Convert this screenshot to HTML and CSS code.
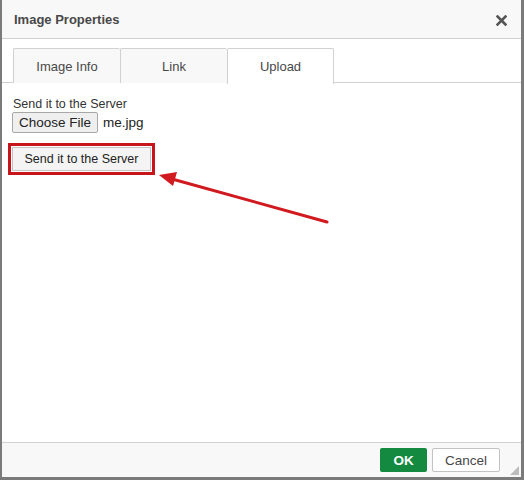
FILE: index.html
```html
<!DOCTYPE html>
<html lang="en">
<head>
  <meta charset="UTF-8">
  <title>Image Properties</title>
  <link rel="stylesheet" href="styles.css">
</head>
<body>
  <div class="dialog">
    <div class="dialog-title">
      <span>Image Properties</span>
      <svg class="close" width="11" height="11" viewBox="0 0 11 11" aria-label="Close">
        <path d="M1.5 1.5 L9.5 9.5 M9.5 1.5 L1.5 9.5" stroke="#555" stroke-width="2.6" stroke-linecap="square"/>
      </svg>
    </div>

    <div class="dialog-body">
      <div class="tabs">
        <div class="tab">Image Info</div>
        <div class="tab">Link</div>
        <div class="tab active">Upload</div>
      </div>

      <div class="tab-panel">
        <div class="field-label">Send it to the Server</div>
        <div class="file-row">
          <button class="file-btn">Choose File</button>
          <span class="file-name">me.jpg</span>
        </div>
        <div class="highlight">
          <button class="send-btn">Send it to the Server</button>
        </div>
      </div>

      <!-- annotation arrow pointing at the upload button -->
      <svg class="arrow" width="524" height="300" viewBox="0 0 524 300" aria-hidden="true">
        <line x1="327" y1="222" x2="172" y2="179" stroke="#d11a1f" stroke-width="3" stroke-linecap="round"/>
        <polygon points="159,175 177,172 173,186" fill="#d11a1f"/>
      </svg>
    </div>

    <div class="dialog-footer">
      <button class="btn-ok">OK</button>
      <button class="btn-cancel">Cancel</button>
      <span class="grip"></span>
    </div>
  </div>
</body>
</html>
```

FILE: styles.css
```css
* {
  margin: 0;
  padding: 0;
  box-sizing: border-box;
}

body {
  font-family: "Liberation Sans", Arial, sans-serif;
  color: #484848;
  background: #fff;
}

/* Dialog frame */
.dialog {
  display: flex;
  flex-direction: column;
  width: 524px;
  height: 480px;
  border-left: 2px solid #7b7b7b;
  border-right: 3px solid #7b7b7b;
  border-bottom: 3px solid #7b7b7b;
  position: relative;
}

.dialog-title {
  display: flex;
  justify-content: space-between;
  align-items: center;
  height: 39px;
  padding: 0 14px 0 12px;
  background: #f8f8f8;
  border-bottom: 1px solid #d1d1d1;
  font-size: 13px;
  font-weight: bold;
  color: #484848;
}

.close {
  margin-top: 2px;
}

.dialog-body {
  flex: 1;
  padding: 9px 0 0 0;
}

/* Tabs */
.tabs {
  display: flex;
  padding-left: 11px;
  border-bottom: 1px solid #d1d1d1;
  height: 35px;
}

.tab {
  width: 107px;
  height: 35px;
  display: flex;
  align-items: center;
  justify-content: center;
  background: #f8f8f8;
  border: 1px solid #d1d1d1;
  border-bottom: none;
  border-right: none;
  border-radius: 2px 2px 0 0;
  font-size: 13px;
  color: #484848;
}

.tab.active {
  background: #fff;
  height: 36px;
  border-right: 1px solid #d1d1d1;
}

/* Upload panel */
.tab-panel {
  padding: 14px 12px 0 11px;
}

.field-label {
  font-size: 12.5px;
  color: #333;
  line-height: 15px;
}

.file-row {
  display: flex;
  align-items: center;
  gap: 5px;
  margin-left: -1px;
}

.file-btn {
  font-family: inherit;
  font-size: 13.5px;
  color: #222;
  height: 21px;
  padding: 0 6px;
  background: #efefef;
  border: 1px solid #a8a8a8;
  border-radius: 2px;
}

.file-name {
  font-size: 13.5px;
  color: #222;
}

.highlight {
  display: inline-block;
  margin-top: 10px;
  margin-left: -5px;
  padding: 1px;
  border: 3px solid #c8141b;
}

.send-btn {
  display: block;
  font-family: inherit;
  font-size: 12.5px;
  color: #222;
  width: 139px;
  height: 24px;
  background: #f4f4f4;
  border: 1px solid #c4c4c4;
}

.arrow {
  position: absolute;
  left: -2px;
  top: 0;
  pointer-events: none;
}

/* Footer */
.dialog-footer {
  display: flex;
  justify-content: flex-end;
  align-items: center;
  gap: 5px;
  height: 35px;
  padding-right: 21px;
  background: #f8f8f8;
  border-top: 1px solid #d1d1d1;
  position: relative;
}

.btn-ok {
  width: 47px;
  height: 24px;
  background: #138a3f;
  color: #fff;
  font-family: inherit;
  font-weight: bold;
  font-size: 13.5px;
  border: none;
  border-radius: 2px;
}

.btn-cancel {
  width: 68px;
  height: 24px;
  background: #fff;
  color: #484848;
  font-family: inherit;
  font-size: 13.5px;
  border: 1px solid #c2c2c2;
  border-radius: 2px;
}

/* resize handle in the corner */
.grip {
  position: absolute;
  right: 2px;
  bottom: 2px;
  width: 0;
  height: 0;
  border-left: 9px solid transparent;
  border-bottom: 9px solid #bcbcbc;
}
```
